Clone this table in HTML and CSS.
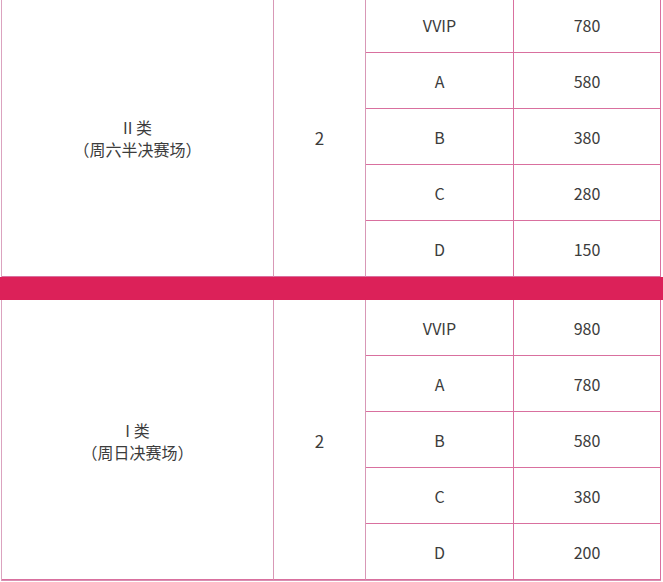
FILE: index.html
```html
<!DOCTYPE html>
<html lang="zh">
<head>
<meta charset="utf-8">
<link rel="stylesheet" href="styles.css">
</head>
<body>
<table class="price">
  <colgroup>
    <col class="c1"><col class="c2"><col class="c3"><col class="c4">
  </colgroup>
  <tbody>
    <tr>
      <td class="cat" rowspan="5">II 类<br>（周六半决赛场）</td>
      <td class="num" rowspan="5">2</td>
      <td>VVIP</td><td>780</td>
    </tr>
    <tr><td>A</td><td>580</td></tr>
    <tr><td>B</td><td>380</td></tr>
    <tr><td>C</td><td>280</td></tr>
    <tr><td>D</td><td>150</td></tr>
    <tr class="band"><td colspan="4"></td></tr>
    <tr>
      <td class="cat" rowspan="5">I 类<br>（周日决赛场）</td>
      <td class="num" rowspan="5">2</td>
      <td>VVIP</td><td>980</td>
    </tr>
    <tr><td>A</td><td>780</td></tr>
    <tr><td>B</td><td>580</td></tr>
    <tr><td>C</td><td>380</td></tr>
    <tr><td>D</td><td>200</td></tr>
  </tbody>
</table>
</body>
</html>
```
FILE: styles.css
```css
html, body {
  margin: 0;
  padding: 0;
  background: #ffffff;
}
.price {
  margin: -3px 0 0 1px;
  border-collapse: separate;
  border-spacing: 0;
  table-layout: fixed;
  width: 660px;
  border-left: 1px solid #dba3bf;
  border-bottom: 1px solid #d98fb1;
  font-family: "Noto Sans CJK SC", "Noto Sans", sans-serif;
  font-size: 16px;
  color: #3c3c3c;
}
.c1 { width: 272px; }
.c2 { width: 92px; }
.c3 { width: 148px; }
.c4 { width: 147px; }
.price td {
  box-sizing: border-box;
  height: 56px;
  padding: 0;
  text-align: center;
  vertical-align: middle;
  border-right: 1px solid #d9709f;
  border-bottom: 1px solid #d9709f;
  line-height: 22px;
}
.price td.cat,
.price td.num {
  border-right-color: #d898b6;
  padding-top: 2px;
}
.price td.num { font-size: 17px; }
.price tr.band td {
  height: 23px;
  background: #dc2159;
  border: none;
  box-shadow: -2px 0 0 #dc2159, 3px 0 0 #dc2159;
}
```
